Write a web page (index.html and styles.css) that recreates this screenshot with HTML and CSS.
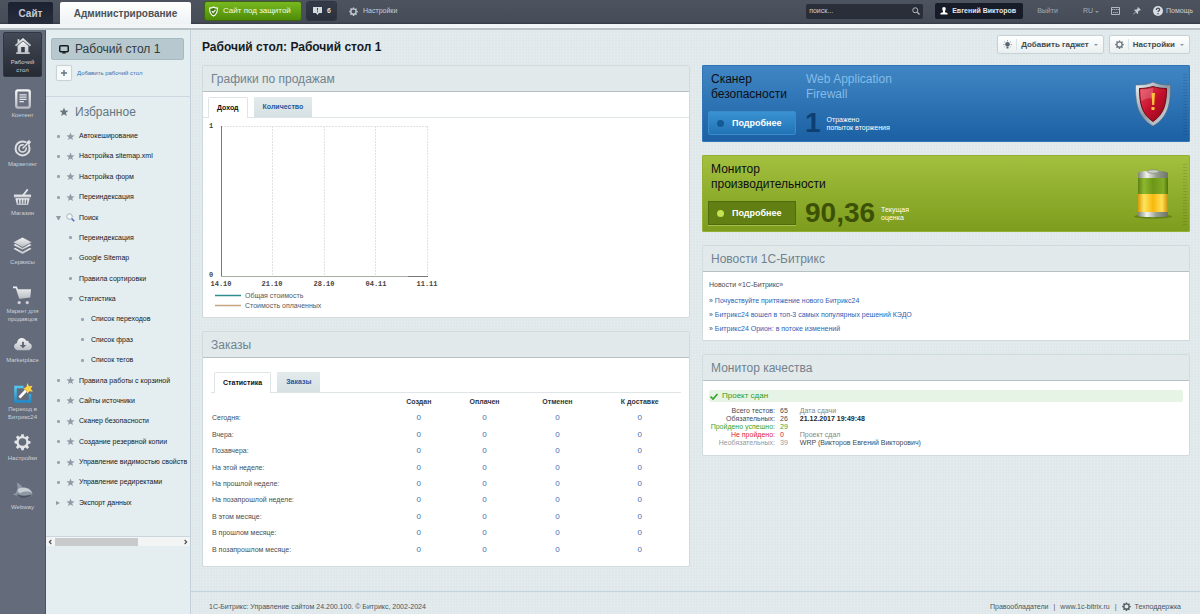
FILE: index.html
```html
<!DOCTYPE html>
<html lang="ru">
<head>
<meta charset="utf-8">
<meta name="viewport" content="width=device-width, initial-scale=1">
<title>Рабочий стол 1</title>
<link rel="stylesheet" href="styles.css">
</head>
<body>
<svg class="defs" width="0" height="0" aria-hidden="true">
  <defs>
    <linearGradient id="metal" x1="0" y1="0" x2="0" y2="1"><stop offset="0" stop-color="#f4f4f5"/><stop offset="1" stop-color="#b9bdc3"/></linearGradient>
    <linearGradient id="blue" x1="0" y1="0" x2="0" y2="1"><stop offset="0" stop-color="#55c6f0"/><stop offset="1" stop-color="#1f8fd0"/></linearGradient>
    <linearGradient id="red" x1="0" y1="0" x2="1" y2="1"><stop offset="0" stop-color="#e8475a"/><stop offset=".5" stop-color="#c4102a"/><stop offset="1" stop-color="#8c0618"/></linearGradient>
    <linearGradient id="steel" x1="0" y1="0" x2="1" y2="1"><stop offset="0" stop-color="#f5f7f9"/><stop offset=".5" stop-color="#8d98a3"/><stop offset="1" stop-color="#e8ecef"/></linearGradient>
    <linearGradient id="cap" x1="0" y1="0" x2="1" y2="0"><stop offset="0" stop-color="#7e8576"/><stop offset=".3" stop-color="#f2f4ef"/><stop offset=".6" stop-color="#9aa193"/><stop offset="1" stop-color="#6d7466"/></linearGradient>
    <linearGradient id="charge" x1="0" y1="0" x2="1" y2="0"><stop offset="0" stop-color="#d99a08"/><stop offset=".2" stop-color="#ffe45e"/><stop offset=".5" stop-color="#f6b90c"/><stop offset=".8" stop-color="#ffdf55"/><stop offset="1" stop-color="#c98d05"/></linearGradient>
    <linearGradient id="glass" x1="0" y1="0" x2="1" y2="0"><stop offset="0" stop-color="#5c8210"/><stop offset=".2" stop-color="#8fb830"/><stop offset=".5" stop-color="#6c9616"/><stop offset=".85" stop-color="#82ab26"/><stop offset="1" stop-color="#50740c"/></linearGradient>
    <symbol id="gear" viewBox="0 0 20 20"><path fill="currentColor" fill-rule="evenodd" d="M8.6 1h2.8l.5 2.5 1.6.7 2.2-1.5 2 2-1.500 2.200.7 1.600 2.500.5v2.800l-2.500.5-.7 1.600 1.500 2.200-2 2-2.200-1.500-1.600.7-.5 2.500H8.600l-.5-2.500-1.600-.7-2.200 1.500-2-2 1.500-2.200-.7-1.600L.6 11.400V8.600l2.500-.5.7-1.600-1.500-2.200 2-2 2.200 1.500 1.600-.7zM10 5.500a4.500 4.500 0 1 0 0 9 4.500 4.500 0 0 0 0-9z"/></symbol>
    <symbol id="star" viewBox="0 0 20 20"><path fill="currentColor" d="M10 1l2.400 6.200 6.600.3-5.200 4.100 1.800 6.400L10 14.300 4.400 18l1.800-6.400L1 7.500l6.600-.3z"/></symbol>
  </defs>
</svg>

<header class="topbar">
  <nav class="modes">
    <a class="mode mode-site" href="#">Сайт</a>
    <a class="mode mode-admin" href="#">Администрирование</a>
  </nav>
  <a class="protect" href="#"><svg viewBox="0 0 16 18" width="9" height="11"><path d="M8 1C6 2.500 3.500 3 1 3c0 6 1.500 11 7 14 5.500-3 7-8 7-14-2.500 0-5-.5-7-2z" fill="#3f7a0a" stroke="#fff" stroke-width="2"/><path d="M5 8.500l2.500 2.500L11.500 6" fill="none" stroke="#fff" stroke-width="2"/></svg>Сайт под защитой</a>
  <a class="counter" href="#"><svg viewBox="0 0 18 16" width="9" height="8"><path d="M0 0h18v12h-6l-3 4-3-4H0z" fill="#d5dade"/><path d="M8 2h2v5H8zM8 8.500h2v2H8z" fill="#3a424e"/></svg>6</a>
  <a class="top-settings" href="#"><svg width="9" height="9"><use href="#gear"/></svg>Настройки</a>
  <div class="top-right">
    <form class="search">
      <input type="text" aria-label="Поиск" placeholder="поиск...">
      <button type="button" aria-label="Найти"><svg viewBox="0 0 16 16" width="8" height="8"><circle cx="6.500" cy="6.500" r="5" fill="none" stroke="#b5bac1" stroke-width="2"/><path d="M10.500 10.500l4.500 4.500" stroke="#b5bac1" stroke-width="2.500"/></svg></button>
    </form>
    <a class="user" href="#"><svg viewBox="0 0 16 16" width="8" height="8"><path fill="#fff" d="M8 0c2.500 0 3.500 1.600 3.500 3.600S10 8 10 9v1.500l5 1.500v3H1v-3l5-1.500V9C6 8 4.500 5.600 4.500 3.600S5.500 0 8 0z"/></svg>Евгений Викторов</a>
    <a class="logout" href="#">Выйти</a>
    <a class="lang" href="#">RU <span class="caret"></span></a>
    <a class="panel-toggle" href="#" aria-label="Панель"><svg viewBox="0 0 18 16" width="9" height="8"><path d="M1 1h16v14H1z" fill="none" stroke="#bfc4ca" stroke-width="1.800"/><path d="M1 5h16M4 11h10" stroke="#bfc4ca" stroke-width="1.500" stroke-dasharray="3 1"/></svg></a>
    <a class="pin" href="#" aria-label="Закрепить"><svg viewBox="0 0 16 16" width="8" height="8"><path fill="#c6cad0" d="M10 0l6 6-2 1-1-.5-3 3 .5 3L9 14 5.500 10.500 1 15l-1 1 1-2.500L5.500 9 2 6l1.500-1 3 .5 3-3L9 1z"/></svg></a>
    <a class="help" href="#"><svg viewBox="0 0 18 18" width="10" height="10"><circle cx="9" cy="9" r="9" fill="#d9dce0"/><path d="M6 7c0-4 6-4 6-.5C12 9 9 8.500 9 11" fill="none" stroke="#434a56" stroke-width="2.200"/><circle cx="9" cy="14" r="1.400" fill="#434a56"/></svg>Помощь</a>
  </div>
</header>

<div class="shell">
  <nav class="rail">
    <a class="rail-item active" href="#"><svg viewBox="0 0 20 20" width="18" height="18"><path fill="url(#metal)" d="M10 1l9 8-1.300 1.500L10 3.800l-7.700 6.700L1 9l3-2.700V2.500h2v2z"/><path fill="url(#metal)" d="M4 10l6-5.200L16 10v7h1.500v2H2.500v-2H4zm4 1v6h4v-6z"/></svg><span>Рабочий стол</span></a>
    <a class="rail-item" href="#"><svg viewBox="0 0 20 22" width="18" height="20"><rect x="2.500" y="1.500" width="15" height="19" rx="2" fill="#697080" stroke="url(#metal)" stroke-width="2.600"/><path d="M6 6.500h8M6 9h8M6 11.500h8M6 14h5" stroke="#e2e4e7" stroke-width="1.300"/></svg><span>Контент</span></a>
    <a class="rail-item" href="#"><svg viewBox="0 0 20 20" width="18" height="18"><circle cx="9.500" cy="10.500" r="7.800" fill="none" stroke="#dcdee1" stroke-width="2.200"/><circle cx="9.500" cy="10.500" r="4" fill="none" stroke="#dcdee1" stroke-width="1.800"/><path d="M10.500 9.500L15 5" stroke="#646b7b" stroke-width="3.600"/><path d="M9.500 10.500l6-6" stroke="#e4e5e8" stroke-width="1.600"/><path d="M14 5.500l.3-2.500L17 .8l.5 1.700 1.700.5L17 5.700z" fill="#e4e5e8"/></svg><span>Маркетинг</span></a>
    <a class="rail-item" href="#"><svg viewBox="0 0 20 18" width="19" height="18"><path d="M10 8l5.500-7" stroke="#e3e5e8" stroke-width="1.800"/><path d="M1 6.500h18v3H1z" fill="url(#metal)"/><path fill="url(#metal)" fill-rule="evenodd" d="M2.500 10.300h15L16 17.500H4zM5 11.500l.5 4.500h1l-.3-4.500zm3 0l.2 4.500h1v-4.500zm3 0V16h1l.2-4.500zm3 0l-.5 4.500h1l.7-4.500z"/></svg><span>Магазин</span></a>
    <a class="rail-item" href="#"><svg viewBox="0 0 20 18" width="19" height="17"><path fill="url(#metal)" d="M10 0l9.500 5L10 10 .5 5z"/><path fill="url(#metal)" d="M.5 8l2-1 7.500 4 7.500-4 2 1-9.500 5z"/><path fill="url(#metal)" d="M.5 12l2-1 7.500 4 7.500-4 2 1-9.500 5.500z"/></svg><span>Сервисы</span></a>
    <a class="rail-item" href="#"><svg viewBox="0 0 20 20" width="19" height="20"><path fill="url(#metal)" d="M0 1h4l1.300 3H19l-.8 8.500-10.500 1.500L6.500 14 3 2.800H0z"/><circle cx="6.500" cy="18" r="1.700" fill="#d0d3d7"/><circle cx="15" cy="18" r="1.700" fill="#d0d3d7"/></svg><span>Маркет для продавцов</span></a>
    <a class="rail-item" href="#"><svg viewBox="0 0 20 16" width="18" height="14"><path fill="url(#metal)" d="M5 15c-6 0-6.500-7-1.500-8C3.500 1 11-1 13.500 4.500c3-.5 3 1.500 3 2.500 5 1 4 8-1 8z"/><path d="M9 5.500h2V9h2.500L10 12.800 6.500 9H9z" fill="#5c6373"/></svg><span>Marketplace</span></a>
    <a class="rail-item" href="#"><svg viewBox="0 0 20 20" width="20" height="20"><path d="M10.500 4H2.500v14.500h14.500V11" fill="none" stroke="url(#blue)" stroke-width="2.600"/><path d="M6.500 14.500L13 7.500" stroke="#fff" stroke-width="2.600"/><path d="M14.500 0l1.500 3.300 3.500-.6-1.700 3 2.100 3-3.500-.5-2.300 2.500-.7-3.400-3.200-1.500 3.100-1.700z" fill="#ffd345"/></svg><span>Переход в Битрикс24</span></a>
    <a class="rail-item" href="#"><svg class="rail-gear" width="17" height="17"><use href="#gear"/></svg><span>Настройки</span></a>
    <a class="rail-item" href="#"><svg viewBox="0 0 22 18" width="21" height="17"><path fill="#8f99a5" d="M6 6L5 0c3 1.500 5 3 6 5 6 0 10 3 10.500 7-1 3-5 4.500-9 4.500-3 0-5-1-6.500-2.500L1 13l3-2z"/><path fill="#c7cdd3" d="M7 6.500c6-2 12 0 14 4.500-3-2-8-2-12 0-2.500 0-4-2-2-4.500z"/><path fill="#4c5564" d="M5 12c4 2.500 10 2.500 16 .5-2 3-5 4-9 4s-6-2-7-4.500z"/></svg><span>Webway</span></a>
  </nav>

  <aside class="sidebar">
    <a class="desk" href="#"><svg viewBox="0 0 20 18" width="10" height="9"><rect x="1.500" y="1.500" width="17" height="12" rx="2" fill="none" stroke="#161a1d" stroke-width="3"/><path d="M6 17h8l-2-3H8z" fill="#161a1d"/></svg>Рабочий стол 1</a>
    <a class="add-desk" href="#"><span class="plus"><svg viewBox="0 0 8 8" width="8" height="8"><path d="M4 1v6M1 4h6" stroke="#617483" stroke-width="1.400"/></svg></span>Добавить рабочий стол</a>
    <h2 class="fav"><svg width="10" height="10"><use href="#star"/></svg>Избранное</h2>
    <ul class="tree">
      <li><i class="dot"></i><svg width="9" height="9"><use href="#star"/></svg><a href="#">Автокеширование</a></li>
      <li><i class="dot"></i><svg width="9" height="9"><use href="#star"/></svg><a href="#">Настройка sitemap.xml</a></li>
      <li><i class="dot"></i><svg width="9" height="9"><use href="#star"/></svg><a href="#">Настройка форм</a></li>
      <li><i class="dot"></i><svg width="9" height="9"><use href="#star"/></svg><a href="#">Переиндексация</a></li>
      <li><i class="open"></i><svg viewBox="0 0 18 18" width="9" height="9"><path d="M11 11l5.500 5.500" stroke="#5a76b8" stroke-width="3.500"/><circle cx="7" cy="7" r="5.500" fill="#f4f9fc" stroke="#a4b0bb" stroke-width="2"/></svg><a href="#">Поиск</a></li>
      <li class="level2"><i class="dot"></i><a href="#">Переиндексация</a></li>
      <li class="level2"><i class="dot"></i><a href="#">Google Sitemap</a></li>
      <li class="level2"><i class="dot"></i><a href="#">Правила сортировки</a></li>
      <li class="level2"><i class="open"></i><a href="#">Статистика</a></li>
      <li class="level3"><i class="dot"></i><a href="#">Список переходов</a></li>
      <li class="level3"><i class="dot"></i><a href="#">Список фраз</a></li>
      <li class="level3"><i class="dot"></i><a href="#">Список тегов</a></li>
      <li><i class="dot"></i><svg width="9" height="9"><use href="#star"/></svg><a href="#">Правила работы с корзиной</a></li>
      <li><i class="dot"></i><svg width="9" height="9"><use href="#star"/></svg><a href="#">Сайты источники</a></li>
      <li><i class="dot"></i><svg width="9" height="9"><use href="#star"/></svg><a href="#">Сканер безопасности</a></li>
      <li><i class="dot"></i><svg width="9" height="9"><use href="#star"/></svg><a href="#">Создание резервной копии</a></li>
      <li><i class="dot"></i><svg width="9" height="9"><use href="#star"/></svg><a href="#">Управление видимостью свойств</a></li>
      <li><i class="dot"></i><svg width="9" height="9"><use href="#star"/></svg><a href="#">Управление редиректами</a></li>
      <li><i class="closed"></i><svg width="9" height="9"><use href="#star"/></svg><a href="#">Экспорт данных</a></li>
    </ul>
    <div class="hscroll">
      <svg viewBox="0 0 6 8" width="4" height="6"><path d="M5 1L2 4l3 3" fill="none" stroke="#444" stroke-width="1.600"/></svg>
      <div class="track"><div class="thumb"></div></div>
      <svg viewBox="0 0 6 8" width="4" height="6"><path d="M1 1l3 3-3 3" fill="none" stroke="#444" stroke-width="1.600"/></svg>
    </div>
  </aside>

  <main class="main">
    <div class="titlebar">
      <h1>Рабочий стол: Рабочий стол 1</h1>
      <button class="tool" type="button"><svg viewBox="0 0 18 18" width="9" height="9"><g stroke="#8b969c" stroke-width="1.600"><path d="M9 0v3M2 3l2.500 2M16 3l-2.500 2M0 9h3M15 9h3M2.500 14l2-1.500M15.500 14l-2-1.500"/></g><circle cx="9" cy="8.500" r="4.500" fill="#59656b"/><path d="M7 13h4v4H7z" fill="#59656b"/></svg><span>Добавить гаджет</span><i class="caret"></i></button>
      <button class="tool" type="button"><svg width="9" height="9"><use href="#gear"/></svg><span>Настройки</span><i class="caret"></i></button>
    </div>

    <div class="columns">
      <div class="column">
        <section class="card">
          <h2 class="card-head">Графики по продажам</h2>
          <div class="tabs tabs-full"><button class="tab current" type="button">Доход</button><button class="tab" type="button">Количество</button></div>
          <svg class="chart" viewBox="0 0 240 199" width="240" height="199" role="img" aria-label="Доход">
            <g stroke="#dfe2df" stroke-width="1" stroke-dasharray="2 1" fill="none"><path d="M18 8.500h207M69.500 8v150M121.500 8v150M172.500 8v150M224.500 8v150"/></g>
            <path d="M18.500 8v150" stroke="#777" fill="none"/><path d="M18 158.500h187" stroke="#a6aea3" fill="none"/><path d="M205 158.500h20" stroke="#777" fill="none"/>
            <g class="axis"><text x="6" y="10">1</text><text x="6" y="159">0</text></g>
            <g class="axis mid"><text x="18" y="168">14.10</text><text x="69" y="168">21.10</text><text x="121" y="168">28.10</text><text x="173" y="168">04.11</text><text x="224" y="168">11.11</text></g>
            <path d="M12 177.500h26" stroke="#2f8c8c" stroke-width="1.500"/><path d="M12 187.500h26" stroke="#c6a582" stroke-width="1.500"/>
            <g class="legend"><text x="42" y="180">Общая стоимость</text><text x="42" y="190">Стоимость оплаченных</text></g>
          </svg>
        </section>

        <section class="card">
          <h2 class="card-head">Заказы</h2>
          <div class="tabs tabs-inset"><button class="tab current" type="button">Статистика</button><button class="tab" type="button">Заказы</button></div>
          <table class="orders">
            <colgroup><col class="c-name"><col class="c-a"><col class="c-a"><col class="c-b"><col class="c-c"></colgroup>
            <thead><tr><td></td><th scope="col">Создан</th><th scope="col">Оплачен</th><th scope="col">Отменен</th><th scope="col">К доставке</th></tr></thead>
            <tbody>
              <tr><th scope="row">Сегодня:</th><td><a href="#">0</a></td><td><a href="#">0</a></td><td><a href="#">0</a></td><td><a href="#">0</a></td></tr>
              <tr><th scope="row">Вчера:</th><td><a href="#">0</a></td><td><a href="#">0</a></td><td><a href="#">0</a></td><td><a href="#">0</a></td></tr>
              <tr><th scope="row">Позавчера:</th><td><a href="#">0</a></td><td><a href="#">0</a></td><td><a href="#">0</a></td><td><a href="#">0</a></td></tr>
              <tr><th scope="row">На этой неделе:</th><td><a href="#">0</a></td><td><a href="#">0</a></td><td><a href="#">0</a></td><td><a href="#">0</a></td></tr>
              <tr><th scope="row">На прошлой неделе:</th><td><a href="#">0</a></td><td><a href="#">0</a></td><td><a href="#">0</a></td><td><a href="#">0</a></td></tr>
              <tr><th scope="row">На позапрошлой неделе:</th><td><a href="#">0</a></td><td><a href="#">0</a></td><td><a href="#">0</a></td><td><a href="#">0</a></td></tr>
              <tr><th scope="row">В этом месяце:</th><td><a href="#">0</a></td><td><a href="#">0</a></td><td><a href="#">0</a></td><td><a href="#">0</a></td></tr>
              <tr><th scope="row">В прошлом месяце:</th><td><a href="#">0</a></td><td><a href="#">0</a></td><td><a href="#">0</a></td><td><a href="#">0</a></td></tr>
              <tr><th scope="row">В позапрошлом месяце:</th><td><a href="#">0</a></td><td><a href="#">0</a></td><td><a href="#">0</a></td><td><a href="#">0</a></td></tr>
            </tbody>
          </table>
        </section>
      </div>

      <div class="column">
        <section class="banner banner-blue">
          <div class="banner-body">
            <div class="banner-row"><h2>Сканер<br>безопасности</h2><p class="waf">Web Application<br>Firewall</p></div>
            <div class="banner-row"><a class="more" href="#"><i></i>Подробнее</a><strong>1</strong><span>Отражено<br>попыток вторжения</span></div>
          </div>
          <svg viewBox="0 0 38 46" width="38" height="46"><path d="M19 1C13 4 7 4 1.500 4c0 18 2 32 17.500 41C34.500 36 36.500 22 36.500 4 31 4 25 4 19 1z" fill="url(#steel)" stroke="#5d6a77" stroke-width=".6"/><path d="M19 5.500C14.500 7 9.500 7.500 5.500 7.500 5.500 23 8 33 19 40.500 30 33 32.500 23 32.500 7.500c-4 0-9-.5-13.500-2z" fill="url(#red)" stroke="#6c0715"/><path d="M6.500 8.500C12 8.500 15 8 19 7v10c-5 0-9 1-11.500 3-.8-4-1-8-1-11.500z" fill="#fff" opacity=".18"/><path d="M17.500 12h3.500l-.8 12h-2zM17.500 26h3v3h-3z" fill="#ffc23c"/></svg>
          <div class="grip"></div>
        </section>

        <section class="banner banner-green">
          <div class="banner-body">
            <div class="banner-row"><h2>Монитор<br>производительности</h2></div>
            <div class="banner-row"><a class="more" href="#"><i></i>Подробнее</a><strong>90,36</strong><span>Текущая<br>оценка</span></div>
          </div>
          <svg viewBox="0 0 38 50" width="38" height="50"><ellipse cx="19" cy="47.500" rx="19" ry="2" fill="#4c6a0a" opacity=".6"/><rect x="4" y="5" width="30" height="40" fill="url(#glass)"/><path d="M4 25h30v20H4z" fill="url(#charge)"/><path d="M4 4c0-3 30-3 30 0v5H4z" fill="url(#cap)"/><ellipse cx="19" cy="2.500" rx="6" ry="1.800" fill="#c8cdc2" stroke="#7a8270" stroke-width=".6"/><path d="M4 43h30v4c0 1.500-30 1.500-30 0z" fill="url(#cap)"/></svg>
          <div class="grip"></div>
        </section>

        <section class="card">
          <h2 class="card-head">Новости 1С-Битрикс</h2>
          <div class="news">
            <p>Новости «1С-Битрикс»</p>
            <ul>
              <li>» <a href="#">Почувствуйте притяжение нового Битрикс24</a></li>
              <li>» <a href="#">Битрикс24 вошел в топ-3 самых популярных решений КЭДО</a></li>
              <li>» <a href="#">Битрикс24 Орион: в потоке изменений</a></li>
            </ul>
          </div>
        </section>

        <section class="card">
          <h2 class="card-head">Монитор качества</h2>
          <div class="quality">
            <p class="passed"><svg viewBox="0 0 16 14" width="8" height="7"><path d="M1 7l5 5 9-10" fill="none" stroke="#3aa52f" stroke-width="3.500"/></svg>Проект сдан</p>
            <div class="report">
              <table class="tests">
                <tr><th scope="row">Всего тестов:</th><td>65</td></tr>
                <tr><th scope="row">Обязательных:</th><td>26</td></tr>
                <tr class="ok"><th scope="row">Пройдено успешно:</th><td>29</td></tr>
                <tr class="bad"><th scope="row">Не пройдено:</th><td>0</td></tr>
                <tr class="opt"><th scope="row">Необязательных:</th><td>39</td></tr>
              </table>
              <dl>
                <dt>Дата сдачи</dt><dd class="date">21.12.2017 19:49:48</dd>
                <dt>Проект сдал</dt><dd>WRP (Викторов Евгений Викторович)</dd>
              </dl>
            </div>
          </div>
        </section>
      </div>
    </div>

    <footer class="footer">
      <span class="copy">1С-Битрикс: Управление сайтом 24.200.100. © Битрикс, 2002-2024</span>
      <a href="#">Правообладатели</a><i>|</i><a href="#">www.1c-bitrix.ru</a><i>|</i><a class="support" href="#"><svg width="9" height="9"><use href="#gear"/></svg>Техподдержка</a>
    </footer>
  </main>
</div>
</body>
</html>
```

FILE: styles.css
```css
* { box-sizing: border-box; }
body {
  margin: 0;
  min-height: 100vh;
  display: flex;
  flex-direction: column;
  font: 7px/8px "Liberation Sans", Arial, sans-serif;
  color: #3f4b54;
  background: #e0e8eb;
}
h1, h2, p, ul, dl, dd { margin: 0; padding: 0; font-weight: normal; }
ul { list-style: none; }
a { color: inherit; text-decoration: none; }
button, input { font: inherit; border: 0; margin: 0; }
svg { flex: none; display: block; }
i { font-style: normal; }
.defs { position: absolute; }
.caret { border: 2px solid transparent; border-top: 2px solid #8d979d; border-bottom: 0; display: inline-block; }

/* Top bar */
.topbar {
  flex: none;
  height: 30px;
  display: flex;
  align-items: flex-start;
  padding: 2px 7px 0 8px;
  color: #c9cdd2;
  background: linear-gradient(#4d5460 0, #454c58 22px, #343a45 24px, #f2f5f6 24px, #f2f5f6 28px, #b9c2c7 28px);
}
.modes { display: flex; gap: 7px; }
.mode { height: 22px; font-size: 10px; line-height: 23px; font-weight: bold; text-align: center; border-radius: 2px 2px 0 0; }
.mode-site { width: 45px; color: #c5cad4; background: linear-gradient(#1c2131, #282d3c); }
.mode-admin { width: 131px; color: #4c5257; background: linear-gradient(#fff, #eef2f3); }
.protect, .counter, .user { display: flex; align-items: center; height: 18px; border-radius: 2px; }
.protect { margin-left: 14px; width: 96px; padding-left: 4px; gap: 5px; font-size: 8px; color: #f2fbe0; background: linear-gradient(#78b81f, #4f8c08); box-shadow: 0 0 0 1px #3c6312; }
.counter { margin-left: 6px; width: 29px; gap: 5px; padding-left: 6px; font-weight: bold; color: #dfe3e7; background: linear-gradient(#343b48, #2a303c); box-shadow: 0 0 0 1px #303743; }
.top-settings { display: flex; align-items: center; gap: 5px; height: 18px; margin-left: 13px; }
.top-right { margin-left: auto; display: flex; align-items: center; height: 18px; }
.search { display: flex; align-items: center; width: 117px; height: 15px; background: #292e39; border-radius: 2px; }
.search input { flex: 1; min-width: 0; padding: 0 3px; color: #cdd1d6; background: none; }
.search input::placeholder { color: #cdd1d6; opacity: 1; }
.search button { width: 14px; padding: 0 3px; background: none; }
.user { margin-left: 12px; width: 88px; height: 16px; padding-left: 5px; gap: 4px; font-weight: bold; color: #e1e4e8; background: #171c28; white-space: nowrap; }
.logout { margin-left: 14px; color: #a3a8b0; }
.lang { margin-left: 25px; color: #a9aeb5; }
.panel-toggle { margin-left: 12px; }
.pin { margin-left: 13px; }
.help { margin-left: 12px; display: flex; align-items: center; gap: 3px; }

/* Page body */
.shell { flex: 1; display: flex; }
.rail { flex: none; width: 46px; padding: 2px 3px; background: #646b7b; border-right: 1px solid #4b5262; }
.rail-item { height: 49px; padding-top: 5px; display: flex; flex-direction: column; align-items: center; color: #cdd1d8; font-size: 6px; line-height: 8px; text-align: center; }
.rail-item svg { height: 20px; margin-bottom: 2px; }
.rail-item.active { height: 45px; margin-bottom: 7px; padding: 3px 5px 0; border-radius: 2px; background: linear-gradient(#434956, #252a33); border: 1px solid #303643; }
.rail-gear { color: #e2e4e7; }

.sidebar { flex: none; width: 145px; padding-top: 7px; overflow: hidden; background: #e4edef; border-right: 1px solid #c2d0da; display: flex; flex-direction: column; }
.desk { display: flex; align-items: center; gap: 6px; margin: 1px 6px 0 5px; height: 22px; padding-left: 7px; font-size: 12px; line-height: 20px; color: #303a40; background: #b7c9cf; border: 1px solid #a9bbc2; border-radius: 2px; }
.add-desk { display: flex; align-items: center; gap: 6px; margin: 6px 0 0 11px; font-size: 6px; color: #3e6db0; }
.plus { display: flex; align-items: center; justify-content: center; width: 14px; height: 14px; background: #f6f9f9; box-shadow: 0 0 1px 1px #c6d0d3; border-radius: 1px; }
.fav { display: flex; align-items: center; gap: 6px; height: 30px; margin-top: 16px; padding-left: 13px; font-size: 12px; line-height: 14px; color: #647782; border-top: 1px solid #cbd6de; }
.tree { display: flex; flex-direction: column; justify-content: space-between; min-height: 387px; color: #15191c; }
.tree li { display: flex; align-items: center; height: 20px; padding-left: 10px; gap: 4px; white-space: nowrap; }
.tree li > svg { color: #8f9ba6; }
.tree i { flex: none; margin-right: 2px; }
.tree .dot { width: 3px; height: 3px; margin-left: 1px; border-radius: 1px; background: #98a6ae; }
.tree .open { width: 5px; margin-right: 1px; border: 2px solid transparent; border-top: 4px solid #8d9ba4; border-bottom: 0; }
.tree .closed { width: 4px; border: 2px solid transparent; border-left: 4px solid #8d9ba4; border-right: 0; }
.tree .level2, .tree .level3 { gap: 5px; }
.tree .level2 { padding-left: 22px; }
.tree .level3 { padding-left: 34px; }
.hscroll { display: flex; align-items: center; gap: 3px; height: 10px; margin-top: 23px; padding: 0 2px; background: #f3f4f4; border-top: 1px solid #cbd6de; }
.track { flex: 1; height: 8px; }
.thumb { width: 66%; height: 8px; background: #c9cacb; }

.main {
  flex: 1;
  min-width: 0;
  display: flex;
  flex-direction: column;
  background:
    repeating-linear-gradient(90deg, rgba(255,255,255,.12) 0 1px, transparent 1px 3px),
    repeating-linear-gradient(rgba(255,255,255,.12) 0 1px, transparent 1px 3px),
    #dee7ea;
}
.titlebar { display: flex; align-items: center; gap: 7px; padding: 5px 11px 0; height: 24px; }
.titlebar h1 { margin-right: auto; padding-top: 5px; font-size: 12px; line-height: 18px; font-weight: bold; color: #171b1e; }
.tool { display: flex; align-items: center; gap: 4px; height: 17px; padding: 0 5px; color: #3f4b50; font-size: 8px; font-weight: bold; background: linear-gradient(#fff, #e9eff0); border-radius: 2px; box-shadow: 0 0 1px 1px #c5d0d3; }
.tool svg { color: #6a757b; }
.tool span { padding: 0 1px 0 4px; border-left: 1px solid #dbe2e4; line-height: 11px; }

.columns { display: grid; grid-template-columns: 1fr 1fr; gap: 12px; padding: 11px 10px 24px 11px; }
.column { display: flex; flex-direction: column; gap: 13px; min-width: 0; }
.card { background: #fff; border: 1px solid #d0dbde; border-radius: 2px; }
.card-head { height: 26px; padding-left: 8px; font-size: 12px; line-height: 26px; color: #71828d; background: #e1e9eb; border-bottom: 1px solid #b5c1c5; }
.tabs { display: flex; align-items: flex-end; gap: 6px; border-bottom: 1px solid #dfe5e7; }
.tab { height: 20px; padding: 0 9px; font-weight: bold; color: #2757a0; background: linear-gradient(#e3ebec, #d6e1e3); }
.tab.current { color: #111; background: #fff; border: 1px solid #dfe5e7; border-bottom: 0; margin-bottom: -1px; height: 21px; padding: 0 8px; border-radius: 2px 2px 0 0; }
.tabs-full { padding: 5px 5px 0; }
.tabs-inset { margin: 14px 8px 0; padding: 0 3px; }
.chart { max-width: 100%; }
.axis { font: bold 7px "Liberation Mono", monospace; fill: #444; }
.mid { text-anchor: middle; }
.legend { font-size: 7px; fill: #55595c; }

.orders { width: calc(100% - 16px); margin: 1px 7px 8px 9px; height: 164px; table-layout: fixed; border-collapse: collapse; text-align: center; }
.c-name { width: 37%; }
.c-a { width: 14%; }
.c-b { width: 17%; }
.c-c { width: 18%; }
.orders tr { height: 16px; }
.orders td, .orders th { padding: 0; }
.orders thead th { color: #30363a; }
.orders tbody th { font-weight: normal; text-align: left; color: #474e52; }
.orders a { color: #3f70b4; font-size: 8px; }

/* Promo banners */
.banner { display: flex; align-items: center; padding: 0 3px 0 6px; height: 77px; border-radius: 2px; color: #fff; }
.banner-blue { background: linear-gradient(#4186c4, #1b60a3); box-shadow: inset 0 0 0 1px #3274b5; }
.banner-green { background: linear-gradient(#a4c03f, #7c9c1d); box-shadow: inset 0 0 0 1px #92b036; }
.banner-body { flex: 1; display: flex; flex-direction: column; gap: 9px; }
.banner-row { display: flex; align-items: center; gap: 9px; }
.banner h2 { min-width: 89px; padding-left: 3px; font-size: 12px; line-height: 15px; color: #0b0f13; }
.banner-row p { font-size: 12px; line-height: 15px; color: #83bce8; }
.more { display: flex; align-items: center; gap: 8px; width: 88px; height: 24px; padding-left: 8px; font-size: 9px; font-weight: bold; }
.more i { width: 7px; height: 7px; border-radius: 50%; }
.banner-blue .more { background: linear-gradient(#3992d2, #2273b5); border: 1px solid #3a8bcb; border-radius: 2px; }
.banner-blue .more i { background: #145b95; }
.banner-green .more { background: #617f13; border: 1px solid #506b0e; box-shadow: 0 1px #a5c04a; }
.banner-green .more i { background: #c4e252; }
.banner strong { font-size: 28px; line-height: 24px; }
.banner-blue strong { color: #0d3f72; }
.banner-green strong { color: #3d5106; }
.banner-row span { padding-top: 1px; }
.banner-row strong + span { margin-left: -3px; }
.grip { width: 4px; height: 62px; margin-left: 11px; background: radial-gradient(circle, rgba(0,0,0,.1) 1px, transparent 1px) 0 0 / 2px 3px; }

.news { padding: 9px 6px 7px; }
.news li { margin-top: 6px; }
.news p + ul { padding-top: 2px; }
.news a { color: #2f62b4; }
.quality { padding: 9px 6px 8px; }
.passed { display: flex; align-items: center; gap: 4px; height: 12px; padding-left: 1px; font-size: 8px; color: #2f9b25; background: #e6f4e6; border-radius: 2px; }
.report { display: flex; gap: 12px; padding-top: 5px; }
.tests { border-collapse: collapse; }
.tests th, .tests td { padding: 0; font-weight: normal; }
.tests th { text-align: right; min-width: 66px; }
.tests td { padding-left: 5px; }
.ok { color: #37a62d; }
.bad { color: #e02430; }
.opt { color: #939a9e; }
.report dt { color: #80878b; }
.report .date { font-weight: bold; color: #22282c; padding-bottom: 8px; }

.footer { margin-top: auto; display: flex; align-items: center; gap: 5px; height: 24px; padding: 6px 19px 0 18px; border-top: 1px solid #c4d2e0; color: #4b565d; }
.copy { margin-right: auto; }
.support { display: flex; align-items: center; gap: 4px; }
```
